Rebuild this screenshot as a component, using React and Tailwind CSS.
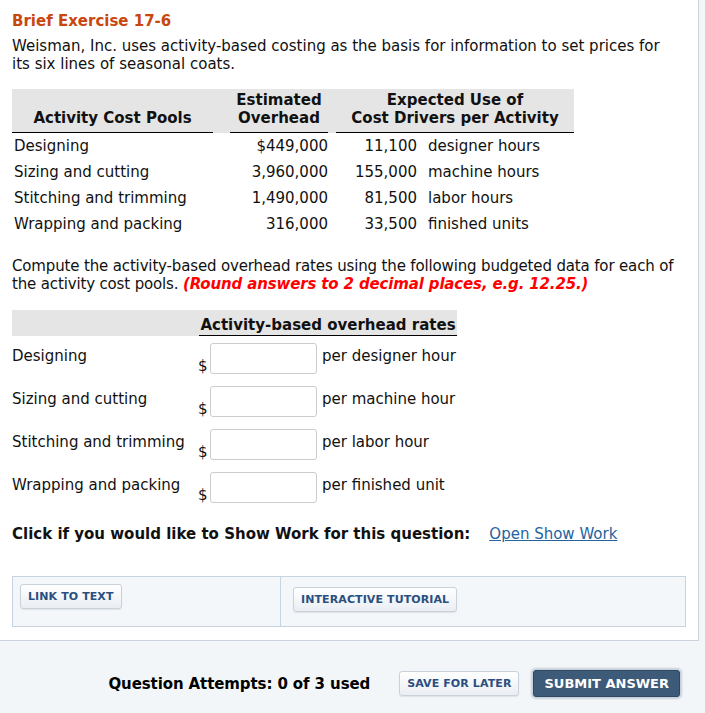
import React from 'react'

const POOLS = [
  { name: 'Designing', overhead: '$449,000', qty: '11,100', unit: 'designer hours' },
  { name: 'Sizing and cutting', overhead: '3,960,000', qty: '155,000', unit: 'machine hours' },
  { name: 'Stitching and trimming', overhead: '1,490,000', qty: '81,500', unit: 'labor hours' },
  { name: 'Wrapping and packing', overhead: '316,000', qty: '33,500', unit: 'finished units' },
]

const RATES = [
  { name: 'Designing', unit: 'per designer hour' },
  { name: 'Sizing and cutting', unit: 'per machine hour' },
  { name: 'Stitching and trimming', unit: 'per labor hour' },
  { name: 'Wrapping and packing', unit: 'per finished unit' },
]

function SmallButton({ children, className = '' }) {
  return (
    <button
      className={`h-[25px] px-[7px] rounded-[3px] border border-[#c9d1db] bg-gradient-to-b from-white to-[#eaeef3] text-[11px] font-bold text-[#2a4f7e] tracking-[0.1px] shadow-[0_1px_1px_rgba(0,0,0,0.08)] ${className}`}
    >
      {children}
    </button>
  )
}

export default function App() {
  return (
    <div className="min-h-[713px] bg-[#f3f6f9] font-['DejaVu_Sans',sans-serif] text-[15px] text-[#111] leading-[18px]">
      <div className="w-[699px] bg-white border-r border-b border-[#c9d2dd] px-3 pt-[12px] pb-[13px]">
        <h1 className="text-[15px] font-bold text-[#c9470f] leading-[18px]">Brief Exercise 17-6</h1>
        <p className="mt-[7px] pr-4">
          Weisman, Inc. uses activity-based costing as the basis for information to set prices for its six lines of seasonal coats.
        </p>

        {/* cost pool table */}
        <div className="mt-[16px] w-[562px]">
          <div className="flex items-end bg-[#e5e5e5] h-[44px] font-bold">
            <div className="w-[201px] text-center border-b border-black pb-[5px]">Activity Cost Pools</div>
            <div className="w-[98px] ml-[17px] text-center border-b border-black pb-[5px]">
              Estimated
              <br />
              Overhead
            </div>
            <div className="w-[238px] ml-[8px] text-center border-b border-black pb-[5px]">
              Expected Use of
              <br />
              Cost Drivers per Activity
            </div>
          </div>
          {POOLS.map((p) => (
            <div key={p.name} className="flex items-center h-[26px]">
              <div className="w-[201px] pl-[2px]">{p.name}</div>
              <div className="w-[98px] ml-[17px] text-right">{p.overhead}</div>
              <div className="w-[81px] ml-[8px] text-right">{p.qty}</div>
              <div className="ml-[11px]">{p.unit}</div>
            </div>
          ))}
        </div>

        <p className="mt-[20px] w-[684px] tracking-[-0.15px]">
          Compute the activity-based overhead rates using the following budgeted data for each of the activity cost pools.{' '}
          <span className="font-bold italic text-[#f00]">(Round answers to 2 decimal places, e.g. 12.25.)</span>
        </p>

        {/* rate inputs */}
        <div className="mt-[17px] w-[445px]">
          <div className="flex items-end h-[26px] bg-[#e5e5e5]">
            <div className="ml-[187px] w-[258px] border-b border-black font-bold text-center pb-[1px]">
              Activity-based overhead rates
            </div>
          </div>
          {RATES.map((r) => (
            <div key={r.name} className="flex items-start h-[43px] pt-[7px]">
              <div className="w-[186px] pt-[4px]">{r.name}</div>
              <div className="flex items-end h-[31px] w-[12px]">
                <span className="leading-[16px]">$</span>
              </div>
              <input className="w-[107px] h-[31px] border border-[#cccccc] rounded-[3px] bg-white outline-none" />
              <div className="ml-[5px] pt-[4px] whitespace-nowrap">{r.unit}</div>
            </div>
          ))}
        </div>

        <div className="mt-[17px] flex items-center font-bold">
          <span>Click if you would like to Show Work for this question:</span>
          <a className="ml-[19px] font-normal text-[#2563a0] underline">Open Show Work</a>
        </div>

        <div className="mt-[33px] flex h-[51px] border border-[#c8d3e0] bg-[#f4f7fa]">
          <div className="w-[268px] border-r border-[#c8d3e0] pl-[7px] pt-[7px]">
            <SmallButton>LINK TO TEXT</SmallButton>
          </div>
          <div className="pl-[12px] pt-[10px]">
            <SmallButton>INTERACTIVE TUTORIAL</SmallButton>
          </div>
        </div>
      </div>

      <div className="flex items-center justify-end pr-[25px] pt-[29px]">
        <span className="font-bold text-[15px] text-black mr-[29px] tracking-[-0.1px]">Question Attempts: 0 of 3 used</span>
        <SmallButton className="h-[25px] px-[7px]">SAVE FOR LATER</SmallButton>
        <button className="ml-[14px] h-[27px] px-[10px] rounded-[3px] bg-[#3d5a78] border border-[#2e4862] text-white text-[13px] font-bold shadow-[0_0_2px_2px_rgba(60,90,120,0.25)]">
          SUBMIT ANSWER
        </button>
      </div>
    </div>
  )
}
